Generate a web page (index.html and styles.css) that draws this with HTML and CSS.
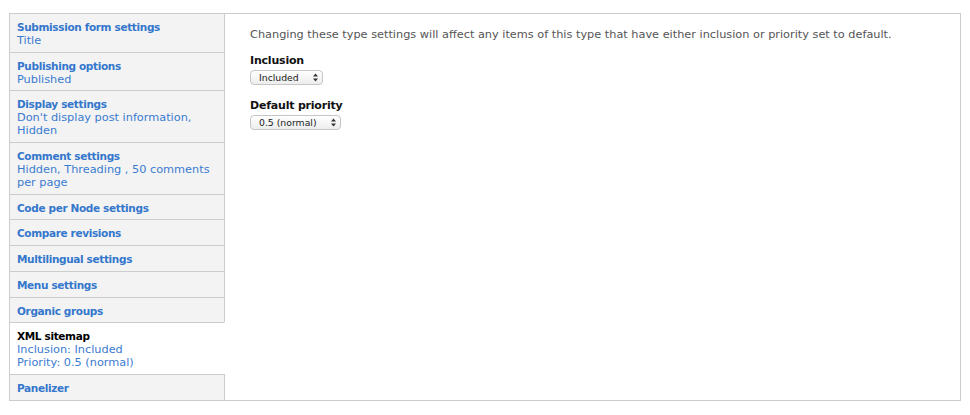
FILE: index.html
```html
<!DOCTYPE html>
<html>
<head>
<meta charset="utf-8">
<link rel="stylesheet" href="styles.css">
</head>
<body>
<div class="vtabs">
  <ul class="tab-list">
    <li class="tab"><a class="tab-title">Submission form settings</a><span class="summary">Title</span></li>
    <li class="tab"><a class="tab-title">Publishing options</a><span class="summary">Published</span></li>
    <li class="tab"><a class="tab-title">Display settings</a><span class="summary">Don't display post information, Hidden</span></li>
    <li class="tab"><a class="tab-title">Comment settings</a><span class="summary">Hidden, Threading , 50 comments per page</span></li>
    <li class="tab"><a class="tab-title">Code per Node settings</a></li>
    <li class="tab"><a class="tab-title">Compare revisions</a></li>
    <li class="tab"><a class="tab-title">Multilingual settings</a></li>
    <li class="tab"><a class="tab-title">Menu settings</a></li>
    <li class="tab"><a class="tab-title">Organic groups</a></li>
    <li class="tab selected"><a class="tab-title">XML sitemap</a><span class="summary">Inclusion: Included</span><span class="summary">Priority: 0.5 (normal)</span></li>
    <li class="tab"><a class="tab-title">Panelizer</a></li>
  </ul>
  <div class="pane">
    <p class="description">Changing these type settings will affect any items of this type that have either inclusion or priority set to default.</p>
    <div class="form-item">
      <label class="label">Inclusion</label>
      <div class="select"><span>Included</span><svg class="arrows" width="5" height="9" viewBox="0 0 5 9"><path d="M2.5 0.5 L5 3.5 L0 3.5 Z M2.5 8.5 L5 5.5 L0 5.5 Z" fill="#333"/></svg></div>
    </div>
    <div class="form-item">
      <label class="label">Default priority</label>
      <div class="select"><span>0.5 (normal)</span><svg class="arrows" width="5" height="9" viewBox="0 0 5 9"><path d="M2.5 0.5 L5 3.5 L0 3.5 Z M2.5 8.5 L5 5.5 L0 5.5 Z" fill="#333"/></svg></div>
    </div>
  </div>
</div>
</body>
</html>
```

FILE: styles.css
```css
html, body {
  margin: 0;
  padding: 0;
  background: #fff;
}
body {
  font-family: "DejaVu Sans", Verdana, sans-serif;
  font-size: 11.3px;
  color: #333;
}
.vtabs {
  display: flex;
  margin: 13px 9px 0 9px;
  border: 1px solid #ccc;
  width: 950px;
}
.tab-list {
  list-style: none;
  margin: 0;
  padding: 0;
  width: 215px;
  flex: none;
}
.tab {
  display: flex;
  flex-direction: column;
  background: #f3f3f3;
  border-top: 1px solid #ccc;
  border-right: 1px solid #ccc;
  padding: 7px 8px 4.7px 7px;
  line-height: 13px;
}
.tab:first-child {
  border-top: none;
}
.tab.selected {
  background: #fff;
  border-right-color: #fff;
}
.tab-title {
  font-weight: bold;
  font-size: 10.5px;
  letter-spacing: -0.35px;
  color: #3477cc;
}
.tab.selected .tab-title {
  color: #000;
}
.summary {
  color: #3a7bd0;
  font-size: 11.3px;
}
.pane {
  flex: 1;
  padding: 14px 25px;
}
.description {
  margin: 0 0 13px 0;
  line-height: 13px;
  color: #555;
}
.form-item {
  margin-bottom: 14px;
  display: flex;
  flex-direction: column;
  align-items: flex-start;
}
.label {
  font-weight: bold;
  font-size: 11px;
  letter-spacing: -0.2px;
  color: #111;
  line-height: 13px;
  margin-bottom: 3px;
}
.select {
  display: inline-flex;
  align-items: center;
  box-sizing: border-box;
  height: 15px;
  padding: 0 4px 0 8px;
  border: 1px solid #c6c6c6;
  border-radius: 4px;
  background: linear-gradient(#ffffff, #ededed);
  font-size: 9.3px;
  color: #222;
}
.arrows {
  margin-left: 14px;
}
```
